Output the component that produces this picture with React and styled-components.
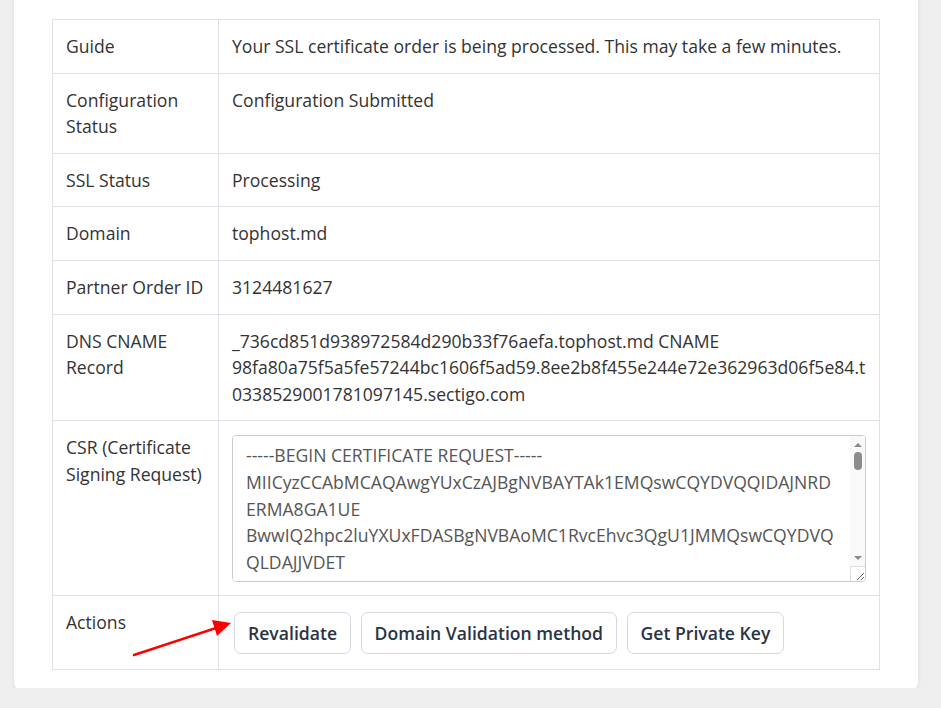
import React from "react";
import styled, { createGlobalStyle } from "styled-components";

const GlobalStyle = createGlobalStyle`
  html, body {
    margin: 0;
    padding: 0;
    background: #efefef;
    overflow: hidden;
  }
  body {
    font-family: "Open Sans", "Noto Sans", sans-serif;
    color: #333;
  }
`;

const Page = styled.div`
  position: relative;
  padding: 0 23px 18px 14px;
  width: 941px;
  height: 708px;
  box-sizing: border-box;
`;

const Card = styled.div`
  margin-top: -20px;
  background: #fff;
  border-radius: 10px;
  box-shadow: 0 1px 4px rgba(0, 0, 0, 0.08);
  padding: 39px 38px 22px;
`;

const Table = styled.table`
  width: 100%;
  border-collapse: collapse;
  font-size: 17.6px;
  line-height: 26.6px;
`;

const Row = styled.tr``;

const LabelCell = styled.td`
  width: 139px;
  border: 1px solid #dee2e6;
  padding: 13px 13px;
  vertical-align: top;
  color: #333;
`;

const ValueCell = styled.td`
  border: 1px solid #dee2e6;
  padding: 13px 13px;
  vertical-align: top;
  color: #333;
  overflow-wrap: anywhere;
`;

const TextareaWrap = styled.div`
  position: relative;
  margin-top: 1px;
`;

const CsrBox = styled.textarea`
  display: block;
  width: 100%;
  height: 147px;
  box-sizing: border-box;
  padding: 6px 28px 6px 13px;
  border: 1px solid #ccc;
  border-radius: 4px;
  font-family: "Open Sans", "Noto Sans", sans-serif;
  font-size: 17.6px;
  line-height: 26.6px;
  color: #555;
  resize: vertical;
  overflow-y: scroll;
  outline: none;
`;

const Scrollbar = styled.div`
  position: absolute;
  top: 1px;
  right: 1px;
  bottom: 16px;
  width: 15px;
  background: #f9f9f9;
  border-top-right-radius: 3px;
  display: flex;
  flex-direction: column;
  align-items: center;
  pointer-events: none;
`;

const ArrowBtn = styled.div`
  height: 15px;
  width: 15px;
  display: flex;
  align-items: center;
  justify-content: center;
  &::after {
    content: "";
    width: 0;
    height: 0;
    border-left: 4px solid transparent;
    border-right: 4px solid transparent;
    ${(p) =>
      p.$dir === "up"
        ? "border-bottom: 4px solid #8a8a8a; margin-top: 2px;"
        : "border-top: 4px solid #8a8a8a; margin-bottom: 2px;"}
  }
`;

const Thumb = styled.div`
  width: 8px;
  height: 18px;
  margin-top: 1px;
  border-radius: 4px;
  background: #8c8c8c;
`;

const Track = styled.div`
  flex: 1;
`;

const Resizer = styled.div`
  position: absolute;
  right: 1px;
  bottom: 1px;
  width: 14px;
  height: 14px;
  border-left: 1px solid #ddd;
  border-top: 1px solid #ddd;
  pointer-events: none;
`;

const Actions = styled.div`
  display: flex;
  gap: 9.5px;
  padding: 3px 0 2px 2px;
`;

const Button = styled.button`
  height: 42px;
  padding: 0 13px;
  background: #fff;
  border: 1px solid #d3d9e2;
  border-radius: 7px;
  font-family: "Open Sans", "Noto Sans", sans-serif;
  font-size: 17.6px;
  font-weight: 600;
  color: #2b3443;
  cursor: pointer;
`;

const Arrow = styled.svg`
  position: absolute;
  left: 0;
  top: 0;
  pointer-events: none;
`;

const csr = `-----BEGIN CERTIFICATE REQUEST-----
MIICyzCCAbMCAQAwgYUxCzAJBgNVBAYTAk1EMQswCQYDVQQIDAJNRDERMA8GA1UE
BwwIQ2hpc2luYXUxFDASBgNVBAoMC1RvcEhvc3QgU1JMMQswCQYDVQQLDAJJVDET
MBEGA1UEAwwKdG9waG9zdC5tZDEhMB8GCSqGSIb3DQEJARYSYWRtaW5AdG9waG9z
dC5tZDCCASIwDQYJKoZIhvcNAQEBBQADggEPADCCAQoCggEBAL
-----END CERTIFICATE REQUEST-----`;

const rows = [
  ["Guide", "Your SSL certificate order is being processed. This may take a few minutes."],
  ["Configuration Status", "Configuration Submitted"],
  ["SSL Status", "Processing"],
  ["Domain", "tophost.md"],
  ["Partner Order ID", "3124481627"],
];

export default function App() {
  return (
    <>
      <GlobalStyle />
      <Page>
        <Card>
          <Table>
            <tbody>
              {rows.map(([k, v]) => (
                <Row key={k}>
                  <LabelCell>{k}</LabelCell>
                  <ValueCell>{v}</ValueCell>
                </Row>
              ))}
              <Row>
                <LabelCell>DNS CNAME Record</LabelCell>
                <ValueCell>
                  _736cd851d938972584d290b33f76aefa.tophost.md CNAME
                  98fa80a75f5a5fe57244bc1606f5ad59.8ee2b8f455e244e72e362963d06f5e84.t0338529001781097145.sectigo.com
                </ValueCell>
              </Row>
              <Row>
                <LabelCell>CSR (Certificate Signing Request)</LabelCell>
                <ValueCell>
                  <TextareaWrap>
                    <CsrBox readOnly defaultValue={csr} />
                    <Scrollbar>
                      <ArrowBtn $dir="up" />
                      <Thumb />
                      <Track />
                      <ArrowBtn $dir="down" />
                    </Scrollbar>
                    <Resizer />
                  </TextareaWrap>
                </ValueCell>
              </Row>
              <Row>
                <LabelCell>Actions</LabelCell>
                <ValueCell>
                  <Actions>
                    <Button>Revalidate</Button>
                    <Button>Domain Validation method</Button>
                    <Button>Get Private Key</Button>
                  </Actions>
                </ValueCell>
              </Row>
            </tbody>
          </Table>
        </Card>
        <Arrow width="941" height="708" viewBox="0 0 941 708">
          <line x1="134" y1="675" x2="216" y2="648" stroke="#ff0000" strokeWidth="2.5" strokeLinecap="round" />
          <polygon points="231,643 212,640 217,656" fill="#ff0000" />
        </Arrow>
      </Page>
    </>
  );
}
